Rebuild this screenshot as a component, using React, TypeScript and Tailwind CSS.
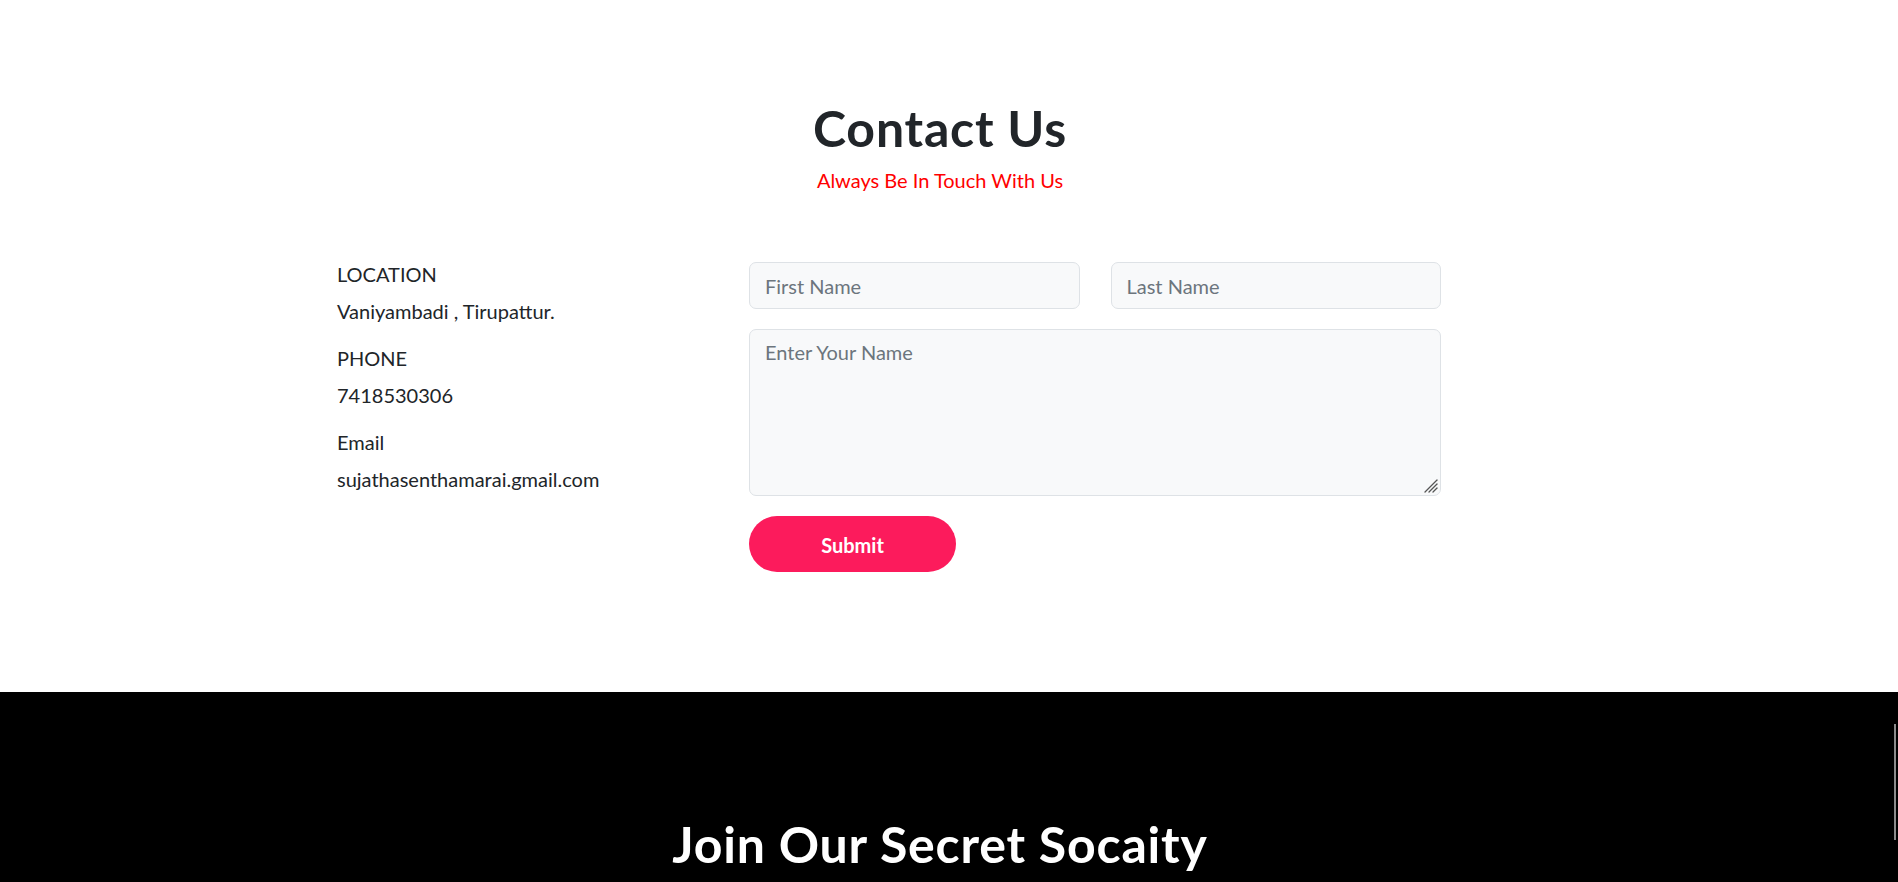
import React from 'react';

const font = "font-['Lato','Open_Sans',sans-serif]";

// Left column: one label with its value under it
const InfoItem: React.FC<{ label: string; value: string; first?: boolean }> = ({ label, value, first }) => (
  <div className={first ? '' : 'mt-[17px]'}>
    <p className="leading-[30px]">{label}</p>
    <p className="mt-[7px] leading-[30px]">{value}</p>
  </div>
);

const inputClass =
  "w-full h-[47px] px-[15px] bg-[#f8f9fa] border border-[#dee2e6] rounded-[7px] text-[20px] leading-[30px] text-[#212529] placeholder:text-[#6c757d] outline-none";

// Windows-style resize grip drawn over the textarea corner
const ResizeGrip = () => (
  <svg className="absolute right-[3px] bottom-[3px] pointer-events-none" width="14" height="14" viewBox="0 0 14 14">
    <g stroke="#555" strokeWidth="1.3" strokeLinecap="round">
      <line x1="13" y1="1" x2="1" y2="13" />
      <line x1="13" y1="5" x2="5" y2="13" />
      <line x1="13" y1="9" x2="9" y2="13" />
    </g>
  </svg>
);

export default function App() {
  return (
    <div className={`${font} w-full min-h-screen bg-white text-[#212529] overflow-hidden relative`}>
      {/* Contact section */}
      <section className="pt-[98px] pb-[120px] pr-[18px]">
        <div className="text-center">
          <h1 className="text-[50px] leading-[60px] font-bold tracking-[0.8px] text-[#212529]">Contact Us</h1>
          <p className="mt-[7px] text-[20px] leading-[30px] text-[#ff0000]">Always Be In Touch With Us</p>
        </div>

        <div className="w-[1206px] mx-auto mt-[64px] flex items-start text-[20px]">
          <div className="w-[412px]">
            <InfoItem first label="LOCATION" value="Vaniyambadi , Tirupattur." />
            <InfoItem label="PHONE" value="7418530306" />
            <InfoItem label="Email" value="sujathasenthamarai.gmail.com" />
          </div>

          <form className="w-[692px] mt-[3px] flex flex-col" onSubmit={(e) => e.preventDefault()}>
            <div className="flex gap-[31px]">
              <input className={inputClass} placeholder="First Name" />
              <input className={inputClass} placeholder="Last Name" />
            </div>
            <div className="relative mt-[20px]">
              <textarea
                className="block w-full h-[167px] px-[15px] py-[7px] bg-[#f8f9fa] border border-[#dee2e6] rounded-[7px] text-[20px] leading-[30px] placeholder:text-[#6c757d] outline-none resize-none"
                placeholder="Enter Your Name"
              />
              <ResizeGrip />
            </div>
            <button
              type="submit"
              className="mt-[20px] w-[207px] h-[56px] pt-[2px] rounded-full bg-[#fc1b5c] text-white text-[20px] font-bold"
            >
              Submit
            </button>
          </form>
        </div>
      </section>

      {/* Newsletter section */}
      <section className="bg-black pt-[122px] pb-[120px] pr-[18px] relative">
        <h2 className="text-center text-[50px] leading-[60px] font-bold tracking-[0.8px] text-white">Join Our Secret Socaity</h2>
        <div className="absolute right-[2px] top-[32px] w-[2px] h-[116px] bg-[#8a8a8a]" />
      </section>
    </div>
  );
}
